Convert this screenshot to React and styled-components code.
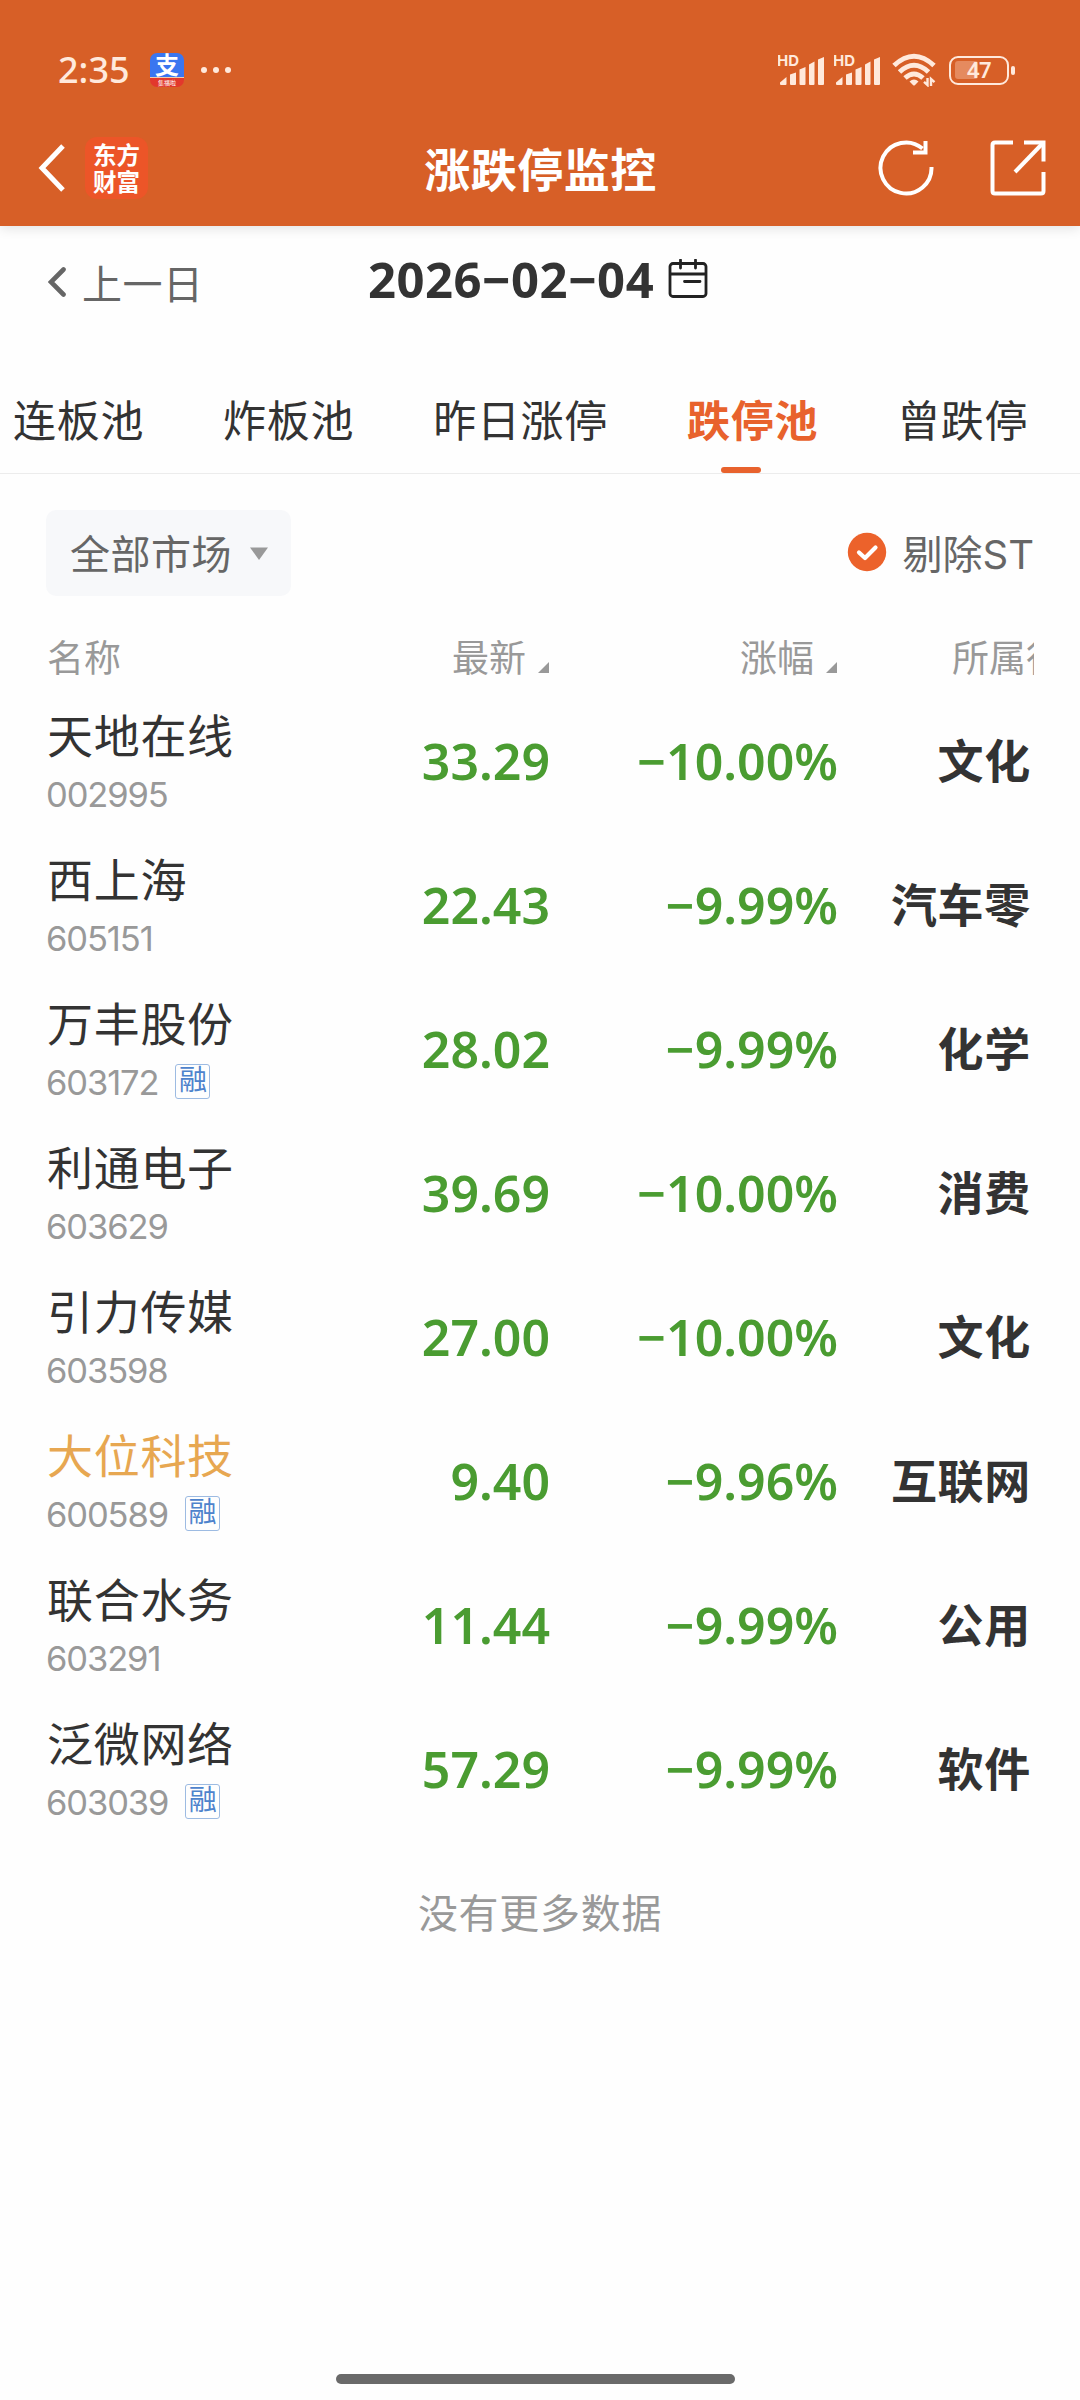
import React from "react";
import styled, { createGlobalStyle } from "styled-components";

// stocks of the limit-down pool
const stocks = [
  { name: "天地在线", code: "002995", price: "33.29", change: "−10.00%", sector: "文化" },
  { name: "西上海", code: "605151", price: "22.43", change: "−9.99%", sector: "汽车零" },
  { name: "万丰股份", code: "603172", margin: true, price: "28.02", change: "−9.99%", sector: "化学" },
  { name: "利通电子", code: "603629", price: "39.69", change: "−10.00%", sector: "消费" },
  { name: "引力传媒", code: "603598", price: "27.00", change: "−10.00%", sector: "文化" },
  { name: "大位科技", code: "600589", margin: true, starred: true, price: "9.40", change: "−9.96%", sector: "互联网" },
  { name: "联合水务", code: "603291", price: "11.44", change: "−9.99%", sector: "公用" },
  { name: "泛微网络", code: "603039", margin: true, price: "57.29", change: "−9.99%", sector: "软件" },
];

const tabs = ["连板池", "炸板池", "昨日涨停", "跌停池", "曾跌停"];

// one SIM: the HD mark and five bars
function Signal() {
  return (
    <svg width="48" height="32" viewBox="0 0 48 32">
      <text x="-1" y="12" fontSize="15" fontWeight="700" fontFamily="Inter" fill="#ffe9dc">
        HD
      </text>
      <g fill="#ffe9dc">
        <path d="M2 28.5 L8.5 23 V30 Q8.5 31 7.5 31 H3 Q2 31 2 30 Z" />
        <path d="M12 20.5 L18 18.5 V30 Q18 31 17 31 H13 Q12 31 12 30 Z" />
        <path d="M21.5 15.5 L27.5 13 V30 Q27.5 31 26.5 31 H22.5 Q21.5 31 21.5 30 Z" />
        <path d="M31 10.5 L36.5 7.5 V30 Q36.5 31 35.5 31 H32 Q31 31 31 30 Z" />
        <path d="M40 5.5 L46 3 V30 Q46 31 45 31 H41 Q40 31 40 30 Z" />
      </g>
    </svg>
  );
}

function Wifi() {
  return (
    <svg width="44" height="34" viewBox="0 0 44 34">
      <g fill="none" stroke="#ffe9dc" strokeWidth="5">
        <path d="M2 12.5 Q22 -6 42 12.5" />
        <path d="M7.5 19 Q22 5.5 36.5 19" />
        <path d="M13 25 Q22 17 31 25" />
      </g>
      <path d="M17.5 28.5 Q22 24.5 26.5 28.5 L22.8 32.3 Q22 32.9 21.2 32.3 Z" fill="#ffe9dc" />
      <path d="M35.5 25 V32 L32 28.8 M39 33 V26 L42.5 29.2" fill="none" stroke="#ffe9dc" strokeWidth="2.4" />
    </svg>
  );
}

export default function App() {
  return (
    <Page>
      <GlobalStyle />
      <Header>
        <StatusBar>
          <Clock>2:35</Clock>
          <PayIcon>
            <b>支</b>
            <i>集福啦</i>
          </PayIcon>
          <Dots>
            <span />
            <span />
            <span />
          </Dots>
          <Spacer />
          <Signals>
            <Signal />
            <Signal />
          </Signals>
          <Wifi />
          <Battery>
            <Cell>
              <Charge style={{ width: "47%" }} />
              <Level>47</Level>
            </Cell>
            <Nub />
          </Battery>
        </StatusBar>
        <NavBar>
          <svg width="28" height="50" viewBox="0 0 28 50">
            <path d="M26 3 L5 25 L26 47" fill="none" stroke="#fff" strokeWidth="5" />
          </svg>
          <Logo>
            <span>东方</span>
            <span>财富</span>
          </Logo>
          <Title>涨跌停监控</Title>
          <Actions>
            {/* refresh */}
            <svg width="60" height="60" viewBox="0 0 60 60">
              <g fill="none" stroke="#fff" strokeWidth="4">
                <path d="M55.5 29 A25.5 25.5 0 1 1 46.5 10.5" />
                <path d="M49.5 3 V14.5 H37" />
              </g>
            </svg>
            {/* share */}
            <svg width="60" height="60" viewBox="0 0 60 60">
              <g fill="none" stroke="#fff" strokeWidth="4">
                <path d="M25 4.5 H7 Q4.5 4.5 4.5 7 V53 Q4.5 55.5 7 55.5 H53 Q55.5 55.5 55.5 53 V34" />
                <path d="M36 4.5 H55.5 V23.5" />
                <path d="M55 5 L27 34" />
              </g>
            </svg>
          </Actions>
        </NavBar>
      </Header>

      <DateBar>
        <PrevDay>
          <svg width="18" height="30" viewBox="0 0 18 30">
            <path d="M15.5 2.5 L3 15 L15.5 27.5" fill="none" stroke="#666" strokeWidth="4.6" strokeLinecap="round" />
          </svg>
          上一日
        </PrevDay>
        <Today>
          <span>2026−02−04</span>
          <svg width="40" height="40" viewBox="0 0 40 40">
            <g fill="none" stroke="#222" strokeWidth="2.8">
              <rect x="2" y="4.5" width="36" height="33" rx="3" />
              <path d="M2 15 H38" />
              <path d="M12.5 1 V9 M27.5 1 V9 M16.5 22.5 H32" strokeLinecap="round" />
            </g>
          </svg>
        </Today>
      </DateBar>

      <Tabs>
        {tabs.map((tab) => (
          <Tab key={tab} $active={tab === "跌停池"}>
            {tab}
          </Tab>
        ))}
      </Tabs>

      <Filters>
        <Market>
          <span>全部市场</span>
          <svg width="18" height="13" viewBox="0 0 18 13">
            <path d="M0 0.5 H18 L9 13 Z" fill="#999" />
          </svg>
        </Market>
        <Exclude>
          <svg width="40" height="40" viewBox="0 0 40 40">
            <circle cx="20" cy="20" r="19.2" fill="#ec622b" />
            <path d="M12 20.5 L18 26 L28.5 15.5" fill="none" stroke="#fff" strokeWidth="4.2" strokeLinecap="round" strokeLinejoin="round" />
          </svg>
          <span>剔除ST</span>
        </Exclude>
      </Filters>

      <HeadRow>
        <span>名称</span>
        <Sortable>
          最新
          <Corner />
        </Sortable>
        <Sortable>
          涨幅
          <Corner />
        </Sortable>
        <Clipped>所属行业</Clipped>
      </HeadRow>
      <List>
        {stocks.map((stock) => (
          <Row key={stock.code}>
            <div>
              <Name $starred={stock.starred}>{stock.name}</Name>
              <Code>
                {stock.code}
                {stock.margin && <Badge>融</Badge>}
              </Code>
            </div>
            <Num>{stock.price}</Num>
            <Num>{stock.change}</Num>
            <Sector>{stock.sector}</Sector>
          </Row>
        ))}
      </List>
      <NoMore>没有更多数据</NoMore>
      <HomeBar />
    </Page>
  );
}

const GlobalStyle = createGlobalStyle`
  * {
    box-sizing: border-box;
  }
  body {
    margin: 0;
    background: #fefefe;
  }
  svg {
    display: block;
    flex: none;
  }
`;

const Page = styled.div`
  display: flex;
  flex-direction: column;
  width: 1080px;
  height: 2400px;
  overflow: hidden;
  background: #fefefe;
  color: #333;
  font-family: Inter, "Noto Sans CJK SC", sans-serif;
`;

const Header = styled.header`
  flex: none;
  height: 226px;
  background: #d75f27;
  box-shadow: 0 2px 12px rgba(0, 0, 0, 0.12);
`;

const StatusBar = styled.div`
  display: flex;
  align-items: center;
  height: 112px;
  padding: 28px 65px 0 58px;
`;

const Clock = styled.span`
  width: 92px;
  color: #ffe9dc;
  font-family: "Noto Sans", sans-serif;
  font-size: 36px;
  font-weight: 500;
  line-height: 40px;
  white-space: nowrap;
`;

const PayIcon = styled.div`
  display: flex;
  flex-direction: column;
  align-items: center;
  width: 34px;
  height: 34px;
  border-radius: 7px;
  background: linear-gradient(#3a76f0 70%, #f3c9a8 70%, #f3c9a8 74%, #e2382c 74%);
  color: #fff;
  b {
    font-size: 24px;
    font-weight: 700;
    line-height: 25px;
  }
  i {
    font-size: 6px;
    font-style: normal;
    line-height: 9px;
  }
`;

const Dots = styled.div`
  display: flex;
  gap: 6px;
  margin-left: 17px;
  span {
    width: 6px;
    height: 6px;
    border-radius: 50%;
    background: #ffe9dc;
  }
`;

const Spacer = styled.div`
  flex: 1;
`;

const Signals = styled.div`
  display: flex;
  gap: 8px;
  margin-right: 10px;
`;

const Battery = styled.div`
  display: flex;
  align-items: center;
  gap: 2px;
  margin-left: 13px;
`;

const Cell = styled.div`
  display: grid;
  width: 60px;
  height: 29px;
  padding: 3.5px;
  border: 2.5px solid #ffe9dc;
  border-radius: 9px;
`;

const Charge = styled.div`
  grid-area: 1 / 1;
  border-radius: 3px;
  background: #e58a5f;
`;

const Level = styled.span`
  grid-area: 1 / 1;
  color: #ffe9dc;
  font-family: "Noto Sans", sans-serif;
  font-size: 22px;
  font-weight: 600;
  letter-spacing: -0.5px;
  line-height: 17px;
  text-align: center;
`;

const Nub = styled.div`
  width: 4px;
  height: 9px;
  border-radius: 2px;
  background: #ffe9dc;
`;

const NavBar = styled.div`
  display: grid;
  grid-template-columns: 48px 240px 1fr 288px;
  align-items: center;
  height: 112px;
  padding: 0 32px 0 37px;
`;

const Logo = styled.div`
  display: flex;
  flex-direction: column;
  align-items: center;
  justify-content: center;
  width: 63px;
  height: 62px;
  border-radius: 12px;
  background: #ec5528;
  color: #fff;
  font-family: "Noto Sans CJK SC", sans-serif;
  font-size: 23.5px;
  font-weight: 700;
  line-height: 27px;
`;

const Title = styled.h1`
  margin: 3px 4px 0 0;
  color: #fff;
  font-size: 46px;
  font-weight: 700;
  letter-spacing: 0.5px;
  line-height: 60px;
  text-align: center;
  white-space: nowrap;
`;

const Actions = styled.div`
  display: flex;
  justify-content: flex-end;
  gap: 52px;
`;

const DateBar = styled.div`
  display: flex;
  align-items: center;
  height: 112px;
  padding-left: 48px;
`;

const PrevDay = styled.div`
  display: flex;
  align-items: center;
  gap: 16px;
  width: 320px;
  color: #666;
  font-size: 40px;
  letter-spacing: 0.5px;
`;

const Today = styled.div`
  display: flex;
  align-items: center;
  gap: 14px;
  margin-top: -6px;
  font-family: "Noto Sans", sans-serif;
  font-size: 49px;
  font-weight: 700;
  letter-spacing: 0.5px;
  line-height: 60px;
`;

const Tabs = styled.nav`
  display: flex;
  gap: 79px;
  height: 136px;
  padding: 51px 0 0 13px;
  border-bottom: 1px solid #ececec;
`;

const Tab = styled.div`
  display: flex;
  flex: none;
  flex-direction: column;
  align-items: center;
  justify-content: space-between;
  color: ${(props) => (props.$active ? "#e8622d" : "#333")};
  font-size: 43px;
  font-weight: ${(props) => (props.$active ? 700 : 400)};
  letter-spacing: 0.7px;
  line-height: 64px;
  &::after {
    content: "";
    width: 40px;
    height: 6px;
    margin-right: 23px;
    border-radius: 3px;
    background: ${(props) => (props.$active ? "#e8622d" : "transparent")};
  }
`;

const Filters = styled.div`
  display: flex;
  align-items: center;
  justify-content: space-between;
  height: 86px;
  margin-top: 36px;
  padding: 0 46px;
`;

const Market = styled.div`
  display: flex;
  align-items: center;
  gap: 18px;
  width: 245px;
  height: 86px;
  padding-left: 24px;
  border-radius: 10px;
  background: #f7f8fa;
  color: #666;
  font-size: 40px;
  letter-spacing: 0.5px;
  span {
    margin-top: -2px;
  }
`;

const Exclude = styled.div`
  display: flex;
  align-items: center;
  gap: 16px;
  margin-top: -2px;
  color: #666;
  font-size: 40px;
`;

const HeadRow = styled.div`
  display: grid;
  grid-template-columns: 260px 242px 288px 197px;
  align-items: center;
  height: 54px;
  margin-top: 33px;
  padding-left: 47px;
  color: #999;
  font-size: 37px;
`;

const Sortable = styled.div`
  display: flex;
  align-items: center;
  justify-content: flex-end;
  gap: 12px;
`;

const Corner = styled.i`
  width: 11px;
  height: 11px;
  margin-top: 23px;
  background: #999;
  clip-path: polygon(100% 0, 100% 100%, 0 100%);
`;

const Clipped = styled.div`
  overflow: hidden;
  padding-left: 115px;
  white-space: nowrap;
`;

const List = styled.div`
  padding-top: 20px;
`;

const Row = styled.div`
  display: grid;
  grid-template-columns: 206px 298px 288px 193px;
  height: 144px;
  padding-left: 46px;
`;

const Name = styled.div`
  height: 66px;
  padding-left: 1px;
  color: ${(props) => (props.$starred ? "#e7a751" : "#333")};
  font-size: 46px;
  letter-spacing: 0.7px;
  line-height: 66px;
  white-space: nowrap;
`;

const Code = styled.div`
  display: flex;
  align-items: center;
  gap: 17px;
  height: 40px;
  margin-top: 5px;
  color: #999;
  font-size: 34.5px;
  letter-spacing: -1.1px;
`;

const Badge = styled.span`
  width: 35px;
  height: 35px;
  margin-top: -2px;
  border: 1.5px solid #9dbbe2;
  border-radius: 3px;
  color: #4d83cc;
  font-size: 28px;
  letter-spacing: 0;
  line-height: 30px;
  text-align: center;
`;

const Num = styled.div`
  color: #4a9c31;
  font-family: "Noto Sans", sans-serif;
  font-size: 50px;
  font-weight: 600;
  line-height: 116px;
  text-align: right;
`;

const Sector = styled.div`
  font-size: 46px;
  font-weight: 700;
  letter-spacing: 0.7px;
  line-height: 117px;
  text-align: right;
`;

const NoMore = styled.div`
  margin-top: 27px;
  color: #999;
  font-size: 40px;
  letter-spacing: 0.7px;
  text-align: center;
`;

const HomeBar = styled.div`
  flex: none;
  width: 399px;
  height: 10px;
  margin: auto 0 16px 336px;
  border-radius: 5px;
  background: #6a6a6a;
`;
